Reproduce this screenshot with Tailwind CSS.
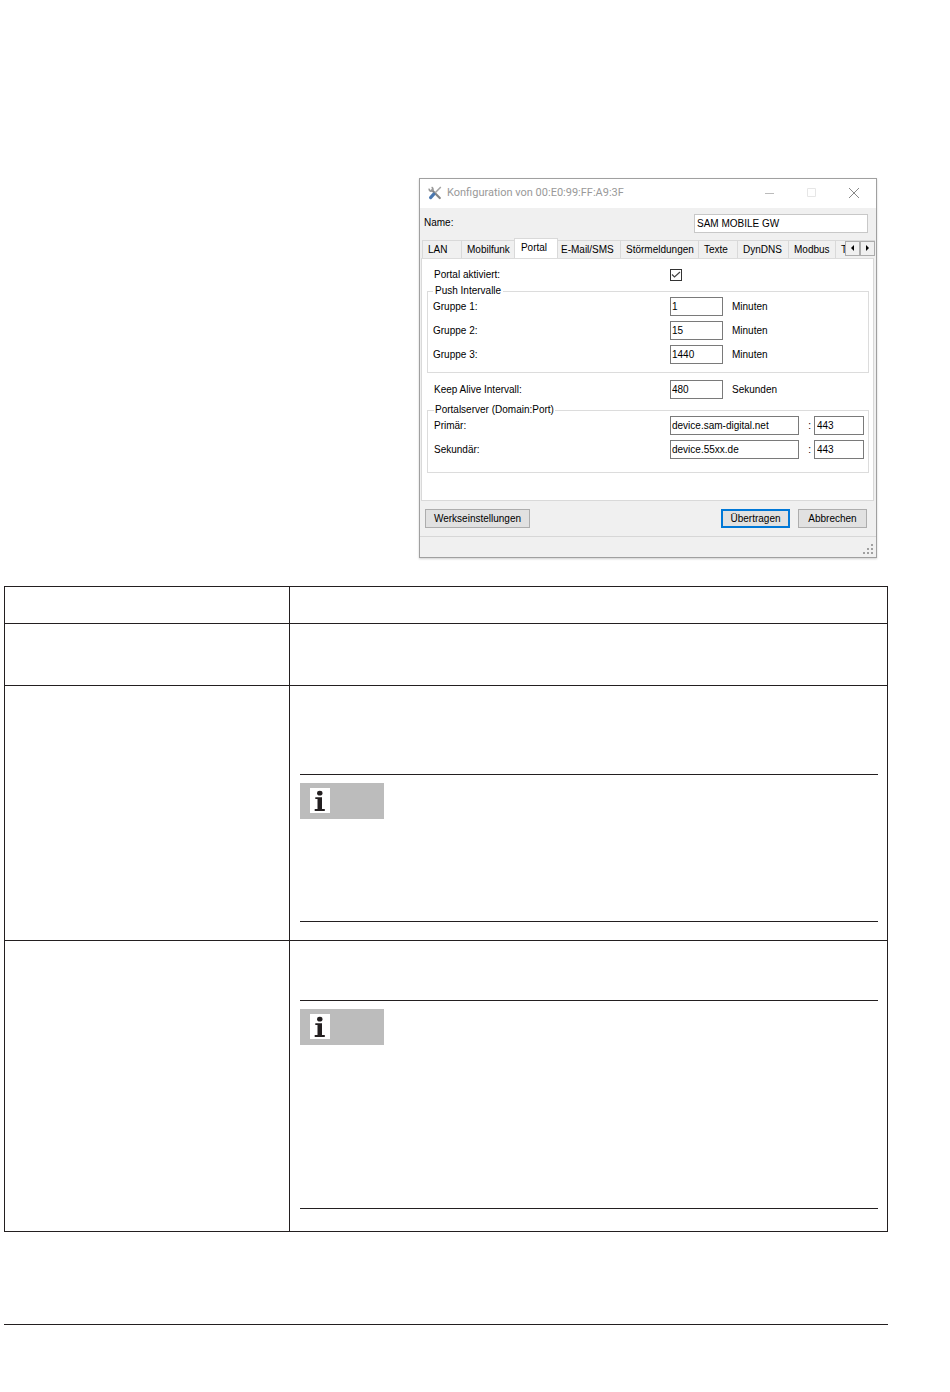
<!DOCTYPE html>
<html lang="de">
<head>
  <meta charset="UTF-8" />
  <meta name="viewport" content="width=device-width, initial-scale=1.0" />
  <title>Konfiguration</title>
  <script src="https://cdn.jsdelivr.net/npm/@tailwindcss/browser@4"></script>
</head>
<body class="bg-white text-black font-['Liberation_Sans',sans-serif]">
  <main class="pt-[178px] pl-1 pr-[62px] pb-16">

    <!-- Dialog -->
    <section class="w-[458px] max-w-full ml-auto mr-[11px] border border-[#a0a0a0] bg-[#f0f0f0] text-[10px] leading-3 shadow-[0_1px_2px_#00000030]">
      <header class="flex items-center h-[29px] pl-2 pr-[15px] pb-0.5 bg-white">
        <svg class="w-[14px] h-[14px] mr-[5px]" viewBox="0 0 14 14" fill="none">
          <path d="M4 4.200 11.800 12" stroke="#858585" stroke-width="2.200" stroke-linecap="round" />
          <path d="M1.200 2.600C1 4.500 2.600 5.600 4.200 4.800 5.400 4 5.300 2 3.600 1.200" stroke="#999" stroke-width="1.700" />
          <path d="M12.800 1 7 7" stroke="#a5a5a5" stroke-width="1.500" />
          <path d="M5.800 8.200 2.600 11.600" stroke="#4a78b0" stroke-width="3.200" stroke-linecap="round" />
        </svg>
        <h1 class="flex-1 font-['Roboto',sans-serif] text-[11px] text-[#999]">Konfiguration von 00:E0:99:FF:A9:3F</h1>
        <div class="flex items-center gap-7">
          <button type="button" aria-label="Minimieren"><svg class="w-[14px] h-[14px]" viewBox="0 0 14 14"><path d="M2 7.500h9" stroke="#bbb" /></svg></button>
          <button type="button" aria-label="Maximieren"><svg class="w-[14px] h-[14px]" viewBox="0 0 14 14"><path d="M2.500 2.500h8v8h-8z" fill="none" stroke="#e6e6e6" /></svg></button>
          <button type="button" aria-label="Schließen"><svg class="w-[14px] h-[14px]" viewBox="0 0 14 14"><path d="M2 2l10 10M12 2 2 12" stroke="#888" /></svg></button>
        </div>
      </header>

      <div class="flex items-center justify-between h-[30px] pl-1 pr-2">
        <label for="name">Name:</label>
        <input id="name" type="text" value="SAM MOBILE GW" class="w-[174px] h-[19px] px-0.5 border border-[#c8c8c8] bg-white">
      </div>

      <!-- Tabs -->
      <div class="flex items-end h-5 pl-0.5">
        <div role="tablist" class="flex items-end flex-1 overflow-hidden">
          <button type="button" role="tab" class="w-[39px] h-[18px] pl-[5px] text-left border-t border-l border-[#d9d9d9]">LAN</button>
          <button type="button" role="tab" class="w-[53px] h-[18px] pl-[5px] text-left border-t border-l border-[#d9d9d9]">Mobilfunk</button>
          <button type="button" role="tab" aria-selected="true" class="w-11 h-5 pr-1 pb-0.5 border-t border-x border-[#d9d9d9] bg-white">Portal</button>
          <button type="button" role="tab" class="w-[62px] h-[18px] pl-[3px] text-left border-t border-[#d9d9d9]">E-Mail/SMS</button>
          <button type="button" role="tab" class="w-[78px] h-[18px] pl-[5px] text-left border-t border-l border-[#d9d9d9]">Störmeldungen</button>
          <button type="button" role="tab" class="w-[39px] h-[18px] pl-[5px] text-left border-t border-l border-[#d9d9d9]">Texte</button>
          <button type="button" role="tab" class="w-[51px] h-[18px] pl-[5px] text-left border-t border-l border-[#d9d9d9]">DynDNS</button>
          <button type="button" role="tab" class="w-[47px] h-[18px] pl-[5px] text-left border-t border-l border-[#d9d9d9]">Modbus</button>
          <button type="button" role="tab" aria-label="Weitere" class="flex-1 h-[18px] pl-[5px] text-left border-t border-l border-[#d9d9d9] overflow-hidden">T</button>
        </div>
        <div class="flex self-end h-[18px] mr-px border-t border-[#d9d9d9]">
          <button type="button" aria-label="Zurück" class="flex items-center justify-center w-[15px] h-[15px] border border-[#acacac] bg-[#f0f0f0]"><svg class="w-[5px] h-[7px]" viewBox="0 0 5 7"><path d="M4 0v6L1 3z" /></svg></button>
          <button type="button" aria-label="Vor" class="flex items-center justify-center w-[15px] h-[15px] border border-[#acacac] bg-[#f0f0f0]"><svg class="w-[5px] h-[7px]" viewBox="0 0 5 7"><path d="M1 0v6l3-3z" /></svg></button>
        </div>
      </div>

      <!-- Tab page "Portal" -->
      <form id="portal" class="mr-0.5 ml-px pl-[5px] pr-1 pt-[10px] pb-[27px] border border-t-[#dcdcdc] border-[#d9d9d9] bg-white">
        <div class="flex items-center h-3 pl-[7px] mb-1">
          <label for="aktiv" class="flex-1">Portal aktiviert:</label>
          <div class="grid w-[199px]">
            <input id="aktiv" type="checkbox" checked class="peer col-start-1 row-start-1 appearance-none w-3 h-3 border border-[#333] bg-white">
            <svg class="col-start-1 row-start-1 w-3 h-3 pointer-events-none invisible peer-checked:visible" viewBox="0 0 12 12"><path d="M2 5.500 4.500 8l5.500-5" fill="none" stroke="#444" stroke-width="1.200" /></svg>
          </div>
        </div>

        <fieldset class="border border-[#dcdcdc] pl-[5px] pb-2">
          <legend class="px-0.5">Push Intervalle</legend>
          <div class="flex flex-col gap-[5px]">
            <div class="flex items-center">
              <label for="g1" class="flex-1">Gruppe 1:</label>
              <div class="flex items-center gap-[9px] w-[198px]"><input id="g1" type="text" value="1" class="w-[53px] h-[19px] px-px border border-[#7a7a7a]"> Minuten</div>
            </div>
            <div class="flex items-center">
              <label for="g2" class="flex-1">Gruppe 2:</label>
              <div class="flex items-center gap-[9px] w-[198px]"><input id="g2" type="text" value="15" class="w-[53px] h-[19px] px-px border border-[#7a7a7a]"> Minuten</div>
            </div>
            <div class="flex items-center">
              <label for="g3" class="flex-1">Gruppe 3:</label>
              <div class="flex items-center gap-[9px] w-[198px]"><input id="g3" type="text" value="1440" class="w-[53px] h-[19px] px-px border border-[#7a7a7a]"> Minuten</div>
            </div>
          </div>
        </fieldset>

        <div class="flex items-center pl-[7px] mt-[7px] mb-[5px]">
          <label for="keep" class="flex-1">Keep Alive Intervall:</label>
          <div class="flex items-center gap-[9px] w-[199px]"><input id="keep" type="text" value="480" class="w-[53px] h-[19px] px-px border border-[#7a7a7a]"> Sekunden</div>
        </div>

        <fieldset class="border border-[#dcdcdc] pl-1.5 pb-[13px]">
          <legend class="px-px">Portalserver (Domain:Port)</legend>
          <div class="flex flex-col gap-[5px]">
            <div class="flex items-center">
              <label for="p1" class="flex-1">Primär:</label>
              <div class="flex items-center w-[198px]">
                <input id="p1" type="text" value="device.sam-digital.net" class="w-[129px] h-[19px] px-px border border-[#7a7a7a]">
                <span class="w-[15px] pr-[3px] text-right">:</span>
                <input type="text" aria-label="Port primär" value="443" class="w-[50px] h-[19px] px-0.5 border border-[#7a7a7a]">
              </div>
            </div>
            <div class="flex items-center">
              <label for="p2" class="flex-1">Sekundär:</label>
              <div class="flex items-center w-[198px]">
                <input id="p2" type="text" value="device.55xx.de" class="w-[129px] h-[19px] px-px border border-[#7a7a7a]">
                <span class="w-[15px] pr-[3px] text-right">:</span>
                <input type="text" aria-label="Port sekundär" value="443" class="w-[50px] h-[19px] px-0.5 border border-[#7a7a7a]">
              </div>
            </div>
          </div>
        </fieldset>
      </form>

      <div class="flex gap-2 pt-2 pb-2 pl-[5px] pr-[9px]">
        <button type="button" class="w-[105px] h-[19px] mr-auto border border-[#adadad] bg-[#e1e1e1]">Werkseinstellungen</button>
        <button type="submit" form="portal" class="w-[69px] h-[19px] border-2 border-[#0078d7] bg-[#e1e1e1]">Übertragen</button>
        <button type="button" class="w-[69px] h-[19px] border border-[#adadad] bg-[#e1e1e1]">Abbrechen</button>
      </div>

      <footer class="flex items-end justify-end h-[21px] pr-[3px] pb-[3px] border-t border-[#d7d7d7]">
        <svg class="w-[10px] h-[10px]" viewBox="0 0 10 10" fill="#a0a0a0">
          <path d="M8 0h2v2H8zM4 4h2v2H4zM8 4h2v2H8zM0 8h2v2H0zM4 8h2v2H4zM8 8h2v2H8z" />
        </svg>
      </footer>
    </section>

    <!-- Description table -->
    <table class="w-full mt-7 border-collapse table-fixed">
      <colgroup><col class="w-[285px]"><col></colgroup>
      <thead>
        <tr class="h-[37px]"><th class="border border-[#231f20]"></th><th class="border border-[#231f20]"></th></tr>
      </thead>
      <tbody>
        <tr class="h-[62px]"><td class="border border-[#231f20]"></td><td class="border border-[#231f20]"></td></tr>
        <tr class="h-[255px]">
          <td class="border border-[#231f20]"></td>
          <td class="border border-[#231f20] align-top pt-[88px] pl-[10px] pr-[9px]">
            <div class="h-[148px] pt-2 border-y border-[#231f20]">
              <div class="w-[84px] h-9 pt-[5px] pl-[10px] bg-[#bcbcbc]">
                <svg class="block w-5 h-[25px] bg-white" viewBox="0 0 20 25" fill="#231f20"><ellipse cx="9.800" cy="5.200" rx="2.700" ry="2.400" /><path d="M5.300 9.200H12V21h2.800v2H4.700v-2h2.800V11H5.300z" /></svg>
              </div>
            </div>
          </td>
        </tr>
        <tr class="h-[291px]">
          <td class="border border-[#231f20]"></td>
          <td class="border border-[#231f20] align-top pt-[59px] pl-[10px] pr-[9px]">
            <div class="h-[209px] pt-2 border-y border-[#231f20]">
              <div class="w-[84px] h-9 pt-[5px] pl-[10px] bg-[#bcbcbc]">
                <svg class="block w-5 h-[25px] bg-white" viewBox="0 0 20 25" fill="#231f20"><ellipse cx="9.800" cy="5.200" rx="2.700" ry="2.400" /><path d="M5.300 9.200H12V21h2.800v2H4.700v-2h2.800V11H5.300z" /></svg>
              </div>
            </div>
          </td>
        </tr>
      </tbody>
    </table>

    <hr class="mt-[92px] border-[#231f20]">
  </main>
</body>
</html>
